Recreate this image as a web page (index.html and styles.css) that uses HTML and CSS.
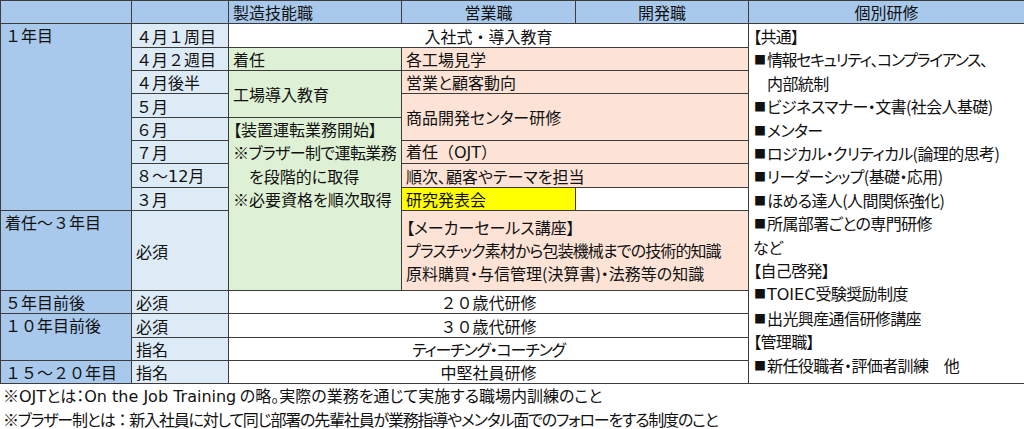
FILE: index.html
```html
<!DOCTYPE html>
<html lang="ja">
<head>
<meta charset="utf-8">
<title>研修体系</title>
<link rel="stylesheet" href="styles.css">
</head>
<body>
<table class="grid">
  <colgroup>
    <col class="c1"><col class="c2"><col class="c3"><col class="c4"><col class="c5"><col class="c6">
  </colgroup>
  <tr class="hd">
    <th></th><th></th><th class="left">製造技能職</th><th>営業職</th><th>開発職</th><th>個別研修</th>
  </tr>
  <tr class="r24">
    <td class="yr top" rowspan="8">１年目</td>
    <td class="mo">４月１周目</td>
    <td class="wc" colspan="3">入社式・導入教育</td>
    <td class="side" rowspan="13">
      <div>【共通】</div>
      <div class="tight"><span class="sq">■</span>情報セキュリティ、コンプライアンス、</div>
      <div><span class="sq ind">■</span>内部統制</div>
      <div><span class="sq">■</span>ビジネスマナー・文書(社会人基礎)</div>
      <div><span class="sq">■</span>メンター</div>
      <div><span class="sq">■</span>ロジカル・クリティカル(論理的思考)</div>
      <div><span class="sq">■</span>リーダーシップ(基礎・応用)</div>
      <div><span class="sq">■</span>ほめる達人(人間関係強化)</div>
      <div><span class="sq">■</span>所属部署ごとの専門研修</div>
      <div>など</div>
      <div>【自己啓発】</div>
      <div><span class="sq">■</span><span class="lat">TOIEC</span>受験奨励制度</div>
      <div><span class="sq">■</span>出光興産通信研修講座</div>
      <div>【管理職】</div>
      <div><span class="sq">■</span>新任役職者・評価者訓練　他</div>
    </td>
  </tr>
  <tr class="r23">
    <td class="mo">４月２週目</td>
    <td class="gr">着任</td>
    <td class="pk" colspan="2">各工場見学</td>
  </tr>
  <tr class="r23">
    <td class="mo">４月後半</td>
    <td class="gr" rowspan="2">工場導入教育</td>
    <td class="pk" colspan="2">営業と顧客動向</td>
  </tr>
  <tr class="r24">
    <td class="mo">５月</td>
    <td class="pk" colspan="2" rowspan="2">商品開発センター研修</td>
  </tr>
  <tr class="r23">
    <td class="mo">６月</td>
    <td class="gr top multi" rowspan="5">
      <div>【装置運転業務開始】</div>
      <div class="tight">※ブラザー制で運転業務</div>
      <div>　を段階的に取得</div>
      <div>※必要資格を順次取得</div>
    </td>
  </tr>
  <tr class="r23">
    <td class="mo">７月</td>
    <td class="pk nopalt" colspan="2">着任（<span class="lat">OJT</span>）</td>
  </tr>
  <tr class="r24">
    <td class="mo">８～<span class="lat">12</span>月</td>
    <td class="pk" colspan="2">順次、顧客やテーマを担当</td>
  </tr>
  <tr class="r23">
    <td class="mo">３月</td>
    <td class="yl">研究発表会</td>
    <td class="wh"></td>
  </tr>
  <tr class="tall">
    <td class="yr top">着任～３年目</td>
    <td class="mo">必須</td>
    <td class="pk multi3" colspan="2">
      <div>【メーカーセールス講座】</div>
      <div class="tighter">プラスチック素材から包装機械までの技術的知識</div>
      <div>原料購買・与信管理(決算書)・法務等の知識</div>
    </td>
  </tr>
  <tr class="r23">
    <td class="yr">５年目前後</td>
    <td class="mo">必須</td>
    <td class="wc" colspan="3">２０歳代研修</td>
  </tr>
  <tr class="r24">
    <td class="yr top" rowspan="2">１０年目前後</td>
    <td class="mo">必須</td>
    <td class="wc" colspan="3">３０歳代研修</td>
  </tr>
  <tr class="r23">
    <td class="mo">指名</td>
    <td class="wc pa" colspan="3">ティーチング・コーチング</td>
  </tr>
  <tr class="r23">
    <td class="yr">１５～２０年目</td>
    <td class="mo">指名</td>
    <td class="wc" colspan="3">中堅社員研修</td>
  </tr>
</table>
<div class="notes">
  <div>※<span class="lat">OJT</span>とは：<span class="lat">On the Job Training</span> の略。実際の業務を通じて実施する職場内訓練のこと</div>
  <div class="tight2">※ブラザー制とは<span class="fw">：</span>新入社員に対して同じ部署の先輩社員が業務指導やメンタル面でのフォローをする制度のこと</div>
</div>
</body>
</html>
```
FILE: styles.css
```css
body {
  margin: 0;
  background: #ffffff;
  color: #111111;
  font-family: "Noto Sans CJK JP", sans-serif;
  font-size: 16px;
}

.grid {
  border-collapse: collapse;
  table-layout: fixed;
  width: 1024px;
}

.c1 { width: 131px; }
.c2 { width: 97px; }
.c3 { width: 173px; }
.c4 { width: 174px; }
.c5 { width: 173px; }
.c6 { width: 276px; }

.grid th,
.grid td {
  border: 1px solid #3c3c3c;
  padding: 0 4px;
  line-height: 20px;
  white-space: nowrap;
  vertical-align: middle;
  overflow: hidden;
}

.grid th {
  background: #a8c9ec;
  font-weight: normal;
  text-align: center;
}

.grid th.left { text-align: left; }

.hd { height: 23px; }
.r24 { height: 24px; }
.r23 { height: 23px; }
.tall { height: 80px; }

.yr { background: #a8c9ec; }
.yr.top { padding-top: 1px; }
.mo { background: #ddebf7; }
.gr { background: #def1d4; font-feature-settings: "palt"; }
.pk { background: #fce3d6; font-feature-settings: "palt"; }
.nopalt { font-feature-settings: normal; }
.yl { background: #ffff00; }
.wh { background: #ffffff; }
.wc { background: #ffffff; text-align: center; }
.pa { font-feature-settings: "palt"; letter-spacing: -1.2px; }

.top { vertical-align: top !important; }

.multi { line-height: 23.4px !important; padding-top: 0 !important; }
.multi3 { line-height: 23px !important; }

.tight { letter-spacing: -0.6px; }
.tighter { letter-spacing: -0.9px; }

.side {
  background: #ffffff;
  vertical-align: top !important;
  line-height: 23.4px !important;
  padding: 1px 0 0 4px !important;
  font-feature-settings: "palt";
  letter-spacing: -0.6px;
}

.side .tight { letter-spacing: -1.4px; }

.sq {
  display: inline-block;
  width: 13px;
  margin-left: 1px;
  font-size: 12px;
  letter-spacing: 0;
  vertical-align: top;
}

.ind { visibility: hidden; }

.lat { font-family: "DejaVu Sans", sans-serif; font-feature-settings: normal; letter-spacing: 0; }

.fw { font-feature-settings: normal; }

.notes {
  padding-left: 3px;
  line-height: 23px;
  font-feature-settings: "palt";
}

.tight2 { letter-spacing: -1.2px; }
```
